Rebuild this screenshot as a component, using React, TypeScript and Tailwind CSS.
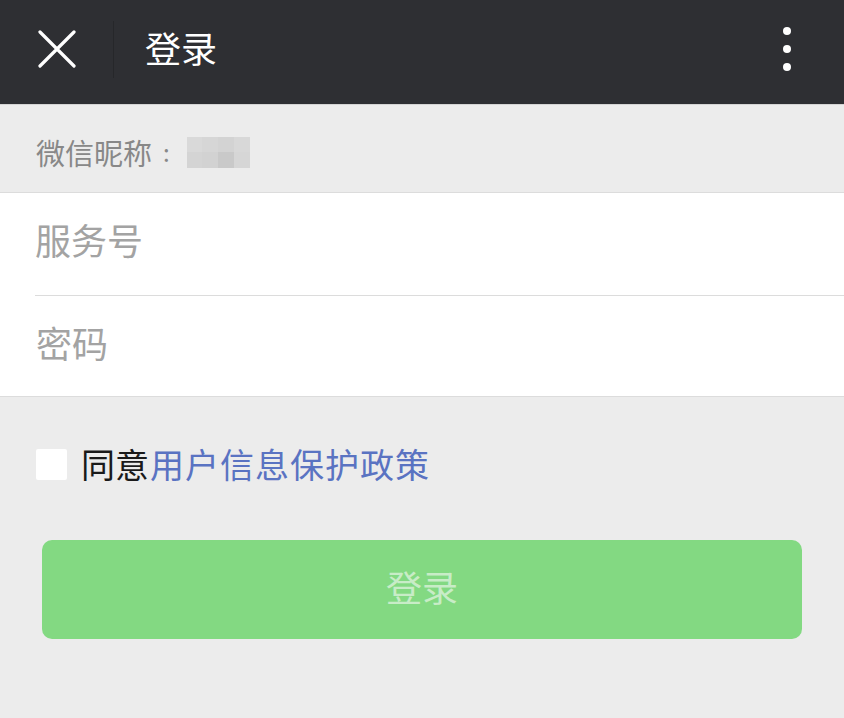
import React from 'react';

const font = "font-['Noto_Sans_CJK_SC','Noto_Sans',sans-serif]";

const mosaic = ['#d9d9d9', '#d6d6d6', '#d3d3d3', '#d8d8d8', '#d4d4d4', '#d2d2d2', '#c9c9c9', '#d6d6d6'];

const CloseIcon: React.FC = () => (
  <svg width="38" height="38" viewBox="0 0 38 38" fill="none" stroke="white" strokeWidth="3.2" strokeLinecap="round">
    <path d="M2 2L36 36M36 2L2 36" />
  </svg>
);

const App: React.FC = () => {
  return (
    <div className={`w-[844px] h-[718px] bg-[#ececec] flex flex-col ${font}`}>
      <header className="h-[105px] bg-[#2e2f33] flex items-center shrink-0 border-b border-[#d4d4d4] pb-[6px]">
        <div className="w-[113px] flex justify-center pl-[1px]">
          <CloseIcon />
        </div>
        <div className="w-px h-[57px] bg-[#26272a]" />
        <h1 className="ml-[31px] text-[36px] leading-none text-white -mt-[4px]">登录</h1>
        <div className="ml-auto mr-[53px] flex flex-col gap-[10px]">
          <span className="w-[8px] h-[8px] rounded-full bg-white" />
          <span className="w-[8px] h-[8px] rounded-full bg-white" />
          <span className="w-[8px] h-[8px] rounded-full bg-white" />
        </div>
      </header>

      <div className="h-[87px] flex items-center pl-[36px] pt-[7px] text-[29px] leading-none text-[#888888]">
        <span>微信昵称</span>
        <span className="ml-[11px] text-[24px]">:</span>
        <div className="grid grid-cols-4 w-[63px] h-[31px] ml-[17px]">
          {mosaic.map((c, i) => (
            <span key={i} style={{ backgroundColor: c }} />
          ))}
        </div>
      </div>

      <div className="bg-white border-y border-[#dcdcdc]">
        <div className="h-[103px] ml-[35px] border-b border-[#dcdcdc] flex items-center text-[36px] text-[#a3a3a3] pb-[10px]">
          服务号
        </div>
        <div className="h-[100px] pl-[36px] flex items-center text-[36px] text-[#a3a3a3] pb-[8px]">
          密码
        </div>
      </div>

      <label className="mt-[50px] ml-[36px] flex items-center">
        <span className="w-[31px] h-[31px] bg-white rounded-[2px]" />
        <span className="ml-[14px] text-[34px] leading-none text-[#1a1a1a]">同意</span>
        <span className="ml-[1px] text-[34px] leading-none text-[#5a73c2] tracking-[1px]">用户信息保护政策</span>
      </label>

      <button className="mt-[59px] mx-[42px] h-[99px] rounded-[10px] bg-[#83d982] text-[36px] leading-none text-[#c8ecc7] pb-[8px]">
        登录
      </button>
    </div>
  );
};

export default App;
